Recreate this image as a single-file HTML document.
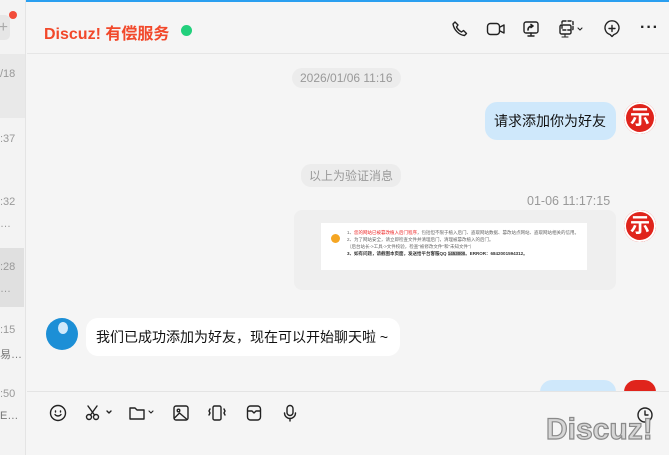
<!DOCTYPE html>
<html><head><meta charset="utf-8"><style>
*{margin:0;padding:0;box-sizing:border-box}
body{width:669px;height:455px;overflow:hidden;background:#f5f5f5;font-family:"Liberation Sans","Noto Sans CJK SC",sans-serif;position:relative}
.abs{position:absolute}
.side{left:0;top:0;width:26px;height:455px;background:#f3f3f3;border-right:1px solid #e4e4e4}
.t{color:#999;font-size:11px;left:0}
.pill{background:#ececec;border-radius:10px;color:#999;font-size:12px;padding:3px 8px}
svg{position:absolute;fill:none;stroke:#222;stroke-width:1.4;stroke-linecap:round;stroke-linejoin:round}
</style></head><body>
<div class="abs" style="left:0;top:0;width:669px;height:2px;background:#2a9ff0"></div>
<div class="abs side">
 <div class="abs" style="left:-6px;top:15px;width:16px;height:25px;background:#e6e6e6;border-radius:5px;color:#aaa;font-size:16px;line-height:25px;text-align:right;padding-right:2px">+</div>
 <div class="abs" style="left:9px;top:11px;width:8px;height:8px;border-radius:50%;background:#f24c3a"></div>
 <div class="abs" style="left:0;top:54px;width:25px;height:64px;background:#e9e9e9"></div>
 <div class="abs t" style="top:68px">/18</div>
 <div class="abs t" style="top:133px">:37</div>
 <div class="abs t" style="top:196px">:32</div>
 <div class="abs t" style="top:218px">…</div>
 <div class="abs" style="left:0;top:248px;width:24px;height:59px;background:#e0e0e0"></div>
 <div class="abs t" style="top:261px">:28</div>
 <div class="abs t" style="top:283px">…</div>
 <div class="abs t" style="top:324px">:15</div>
 <div class="abs t" style="top:346px;color:#777">易…</div>
 <div class="abs t" style="top:388px">:50</div>
 <div class="abs t" style="top:410px;color:#777">E…</div>
</div>
<div class="abs" style="left:27px;top:53px;width:642px;height:1px;background:#e6e6e6"></div>
<div class="abs" style="left:44px;top:20px;font-size:16px;font-weight:bold;color:#f2482a">Discuz! 有偿服务</div>
<div class="abs" style="left:181px;top:25px;width:11px;height:11px;border-radius:50%;background:#22d07c"></div>
<svg style="left:451px;top:20px" width="18" height="18" viewBox="0 0 18 18"><path d="M4 2l3 3-1.5 2c1 2 3 4 5 5l2-1.5 3 3-2 2C8 15 3 10 2 4z"/></svg>
<svg style="left:486px;top:21px" width="20" height="16" viewBox="0 0 20 16"><rect x="1.5" y="2.5" width="12" height="11" rx="3"/><path d="M14 6l4-2v8l-4-2"/></svg>
<svg style="left:522px;top:20px" width="18" height="18" viewBox="0 0 18 18"><rect x="2" y="2" width="14" height="11" rx="2"/><path d="M6 16h6M9 13v3"/><path d="M6 10c0-3 2-4 5-4l-2-1.5M11 6l-2 1.5" stroke-width="1.6"/></svg>
<svg style="left:558px;top:19px" width="28" height="20" viewBox="0 0 28 20"><rect x="4" y="2" width="11" height="9" rx="1" stroke-dasharray="3 2"/><rect x="2" y="6" width="11" height="9" rx="1.5"/><path d="M7 15v3M4 18h6M20 9l2 2 2-2" stroke-width="1.1"/></svg>
<svg style="left:603px;top:20px" width="18" height="18" viewBox="0 0 18 18"><path d="M9 16.5l-2-2A7 7 0 1 1 11 14.5z"/><path d="M9 5.5v6M6 8.5h6"/></svg>
<div class="abs" style="left:640px;top:19px;font-size:16px;font-weight:bold;color:#222;letter-spacing:1px">···</div>
<div class="abs pill" style="left:292px;top:68px">2026/01/06 11:16</div>
<div class="abs" style="left:485px;top:102px;width:131px;height:38px;background:#cfe8fb;border-radius:12px;font-size:14px;color:#111;line-height:38px;padding-left:9px">请求添加你为好友</div>
<div class="abs" style="left:624px;top:102px;width:32px;height:32px;border-radius:50%;background:#e0241c;color:#fff;font-size:20px;text-align:center;line-height:32px;font-weight:bold;box-shadow:inset 0 0 0 2px #fff,inset 0 0 0 3px #e0241c">示</div>
<div class="abs pill" style="left:301px;top:164px">以上为验证消息</div>
<div class="abs" style="left:527px;top:194px;font-size:12.5px;color:#999">01-06 11:17:15</div>
<div class="abs" style="left:624px;top:210px;width:32px;height:32px;border-radius:50%;background:#e0241c;color:#fff;font-size:20px;text-align:center;line-height:32px;font-weight:bold;box-shadow:inset 0 0 0 2px #fff,inset 0 0 0 3px #e0241c">示</div>
<div class="abs" style="left:294px;top:210px;width:322px;height:80px;background:#efefef;border-radius:8px"></div>
<div class="abs" style="left:321px;top:223px;width:266px;height:47px;background:#fff;font-size:4.5px;line-height:7px;color:#666;padding:6px 0 0 26px">
 <div class="abs" style="left:10px;top:11px;width:9px;height:9px;border-radius:50%;background:#f5a623"></div>
 <div>1、<span style="color:#e22">您的网站已被篡改植入后门程序</span>，包括但不限于植入后门、盗取网站数据、篡改站点网站、盗取网站相关的信用。</div>
 <div>2、为了网站安全，请立即检查文件并清理后门，清理被篡改植入的后门。</div>
 <div>（后台站长-&gt;工具-&gt;文件校验，检查"被修改文件"和"未知文件"）</div>
 <div style="font-weight:bold;color:#333">3、如有问题，请截图本页面，发送给平台客服QQ <span style="background:#ccc">1453000</span>。ERROR：6842001594312。</div>
</div>
<div class="abs" style="left:46px;top:318px;width:32px;height:32px;border-radius:50%;background:#1c8fd6"></div>
<div class="abs" style="left:58px;top:322px;width:10px;height:12px;border-radius:50%;background:#cfe9fb"></div>
<div class="abs" style="left:86px;top:318px;width:314px;height:38px;background:#fff;border-radius:12px;font-size:14px;color:#111;line-height:38px;padding-left:10px">我们已成功添加为好友，现在可以开始聊天啦 ~</div>
<div class="abs" style="left:540px;top:380px;width:76px;height:12px;background:#cfe8fb;border-radius:12px 12px 0 0"></div>
<div class="abs" style="left:624px;top:380px;width:32px;height:12px;border-radius:16px 16px 0 0;background:#e0241c"></div>
<div class="abs" style="left:27px;top:391px;width:642px;height:64px;background:#f5f5f5;border-top:1px solid #e4e4e4"></div>
<svg style="left:49px;top:404px" width="18" height="18" viewBox="0 0 18 18"><circle cx="9" cy="9" r="7.5"/><path d="M6 10.5c1.5 2 4.5 2 6 0M6.5 7v1M11.5 7v1"/></svg>
<svg style="left:85px;top:404px" width="28" height="18" viewBox="0 0 28 18"><circle cx="4" cy="13" r="2.5"/><circle cx="11" cy="13" r="2.5"/><path d="M5.5 11L12 2M9.5 11L3 2M22 7l2 2 2-2" /></svg>
<svg style="left:128px;top:404px" width="30" height="18" viewBox="0 0 30 18"><path d="M2 4h5l2 2h7v9H2z"/><path d="M21 7l2 2 2-2" stroke-width="1.1"/></svg>
<svg style="left:172px;top:404px" width="18" height="18" viewBox="0 0 18 18"><rect x="2" y="2" width="14" height="14" rx="2"/><circle cx="6.5" cy="6.5" r="1.3"/><path d="M2.5 14l5-5 7 6"/></svg>
<svg style="left:207px;top:404px" width="20" height="18" viewBox="0 0 20 18"><rect x="6" y="2" width="8" height="14" rx="1.5"/><path d="M3 5l-1 2 1 2-1 2M17 5l1 2-1 2 1 2"/></svg>
<svg style="left:245px;top:404px" width="18" height="18" viewBox="0 0 18 18"><rect x="2.5" y="2" width="13" height="14" rx="3"/><path d="M3 7h4l2 2 2-2h4"/></svg>
<svg style="left:281px;top:404px" width="18" height="18" viewBox="0 0 18 18"><rect x="6" y="1.5" width="6" height="10" rx="3"/><path d="M3.5 9a5.5 5.5 0 0 0 11 0M9 14.5v2.5"/></svg>
<svg style="left:636px;top:406px" width="18" height="18" viewBox="0 0 18 18"><circle cx="9" cy="9" r="7"/><path d="M9 5v4h3"/></svg>
<div class="abs" style="left:546px;top:413px;font-size:30px;font-weight:bold;color:#d6d6d6;-webkit-text-stroke:1.2px #8a8a8a;letter-spacing:0">Discuz!</div>
</body></html>
